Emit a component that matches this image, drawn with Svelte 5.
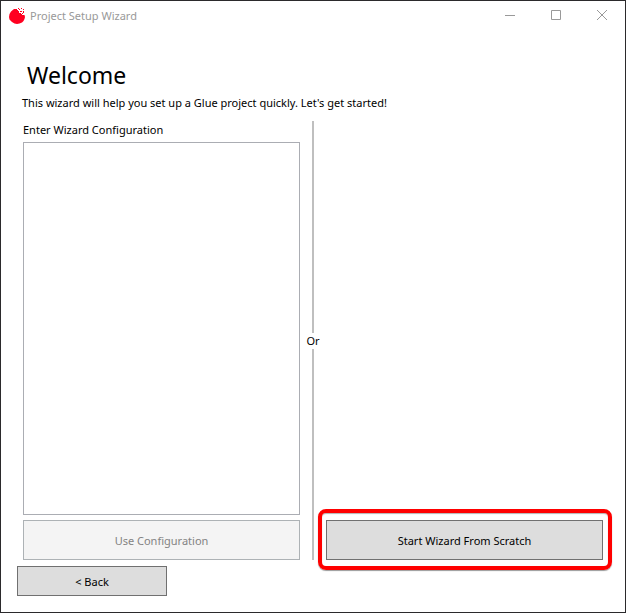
<script lang="ts">
    let configuration = $state('');
    let canUse = $derived(configuration.trim().length > 0);
</script>

<div class="window">
    <header class="title-bar">
        <svg class="logo" width="16" height="16" viewBox="0 0 16 16" aria-hidden="true">
            <path fill="#ff0020" d="M5 1h3v1h1v1h1v2h2v1h1v1h2.500l.5 2-.5 2-1 2-1.500 1.500-2.500 1-2.500.5-2.500-.5-2.500-1.500L.5 11.500 0 9l.5-3L2 3.500z" />
            <path fill="#ff0020" d="M9 0h1v1H9zM12 0h1v1h-1zM10 1h1v1h-1zM14 1h1v1h-1zM11 3h2v1h-2zM14 3h1v2h-1zM13 5h1v1h-1z" />
        </svg>
        <span class="title">Project Setup Wizard</span>
        <div class="window-buttons">
            <button aria-label="Minimize">
                <svg width="10" height="10" viewBox="0 0 10 10"><path d="M0 5.500h10" /></svg>
            </button>
            <button aria-label="Maximize">
                <svg width="10" height="10" viewBox="0 0 10 10"><path d="M.5.5h9v9h-9z" /></svg>
            </button>
            <button aria-label="Close">
                <svg width="10" height="10" viewBox="0 0 10 10"><path d="M0 0l10 10M10 0L0 10" /></svg>
            </button>
        </div>
    </header>

    <main>
        <h1>Welcome</h1>
        <p class="intro">This wizard will help you set up a Glue project quickly. Let's get started!</p>

        <div class="choices">
            <section class="config">
                <label for="configuration">Enter Wizard Configuration</label>
                <textarea id="configuration" bind:value={configuration}></textarea>
                <button class="btn tall" disabled={!canUse}>Use Configuration</button>
            </section>

            <div class="divider"><span>Or</span></div>

            <section class="scratch">
                <div class="highlight">
                    <button class="btn tall">Start Wizard From Scratch</button>
                </div>
            </section>
        </div>
    </main>

    <footer>
        <button class="btn back">&lt; Back</button>
    </footer>
</div>

<style>
    :global(body) {
        margin: 0;
    }

    .window {
        display: flex;
        flex-direction: column;
        min-height: 100vh;
        box-sizing: border-box;
        border: 1px solid #2b2a2c;
        background: #fff;
        color: #000;
        font-family: 'Segoe UI', 'Noto Sans', 'Open Sans', sans-serif;
        font-size: 11px;
        line-height: 18px;
    }

    .title-bar {
        display: flex;
        align-items: center;
        height: 30px;
        padding-left: 8px;
    }

    .title {
        margin-left: 5px;
        color: #999;
    }

    .window-buttons {
        display: flex;
        height: 100%;
        margin-left: auto;
    }

    .window-buttons button {
        display: flex;
        justify-content: center;
        align-items: center;
        width: 46px;
        padding: 0 0 2px;
        border: none;
        background: none;
    }

    .window-buttons path {
        fill: none;
        stroke: #999;
    }

    main {
        display: flex;
        flex-direction: column;
        flex: 1;
        padding: 28px 22px 0;
    }

    h1 {
        margin: 0 0 3px 4px;
        font-size: 23px;
        font-weight: 400;
        line-height: 32px;
    }

    .intro {
        margin: 0 0 9px -1px;
    }

    .choices {
        display: grid;
        grid-template-columns: 1fr 26px 1fr;
        flex: 1;
    }

    .config {
        display: flex;
        flex-direction: column;
    }

    textarea {
        flex: 1;
        box-sizing: border-box;
        margin: 3px 0 5px;
        padding: 2px;
        border: 1px solid #abadb3;
        background: #fff;
        font: inherit;
        resize: none;
    }

    .btn {
        box-sizing: border-box;
        height: 30px;
        padding: 2px 8px 0;
        border: 1px solid #707070;
        background: #ddd;
        color: #000;
        font: inherit;
    }

    .btn:disabled {
        border-color: #adb2b5;
        background: #f4f4f4;
        color: #838383;
    }

    .btn.tall {
        width: 100%;
        height: 40px;
    }

    .btn.back {
        width: 150px;
    }

    .divider {
        display: flex;
        flex-direction: column;
        align-items: center;
        line-height: 16px;
    }

    .divider::before,
    .divider::after {
        content: '';
        flex: 1;
        width: 2px;
        background: #bfbfbf;
    }

    .scratch {
        display: flex;
        align-items: flex-end;
    }

    .highlight {
        position: relative;
        width: 100%;
    }

    /* Red marker drawn around the recommended button */
    .highlight::after {
        content: '';
        position: absolute;
        inset: -11px -9px -10px -8px;
        border: 4px solid #f00;
        border-radius: 8px;
        box-shadow: 0 1px 1px rgba(0, 0, 0, 0.4), inset 0 1px 1px rgba(0, 0, 0, 0.3);
        pointer-events: none;
    }

    footer {
        padding: 6px 16px 16px;
        line-height: 0;
    }
</style>
